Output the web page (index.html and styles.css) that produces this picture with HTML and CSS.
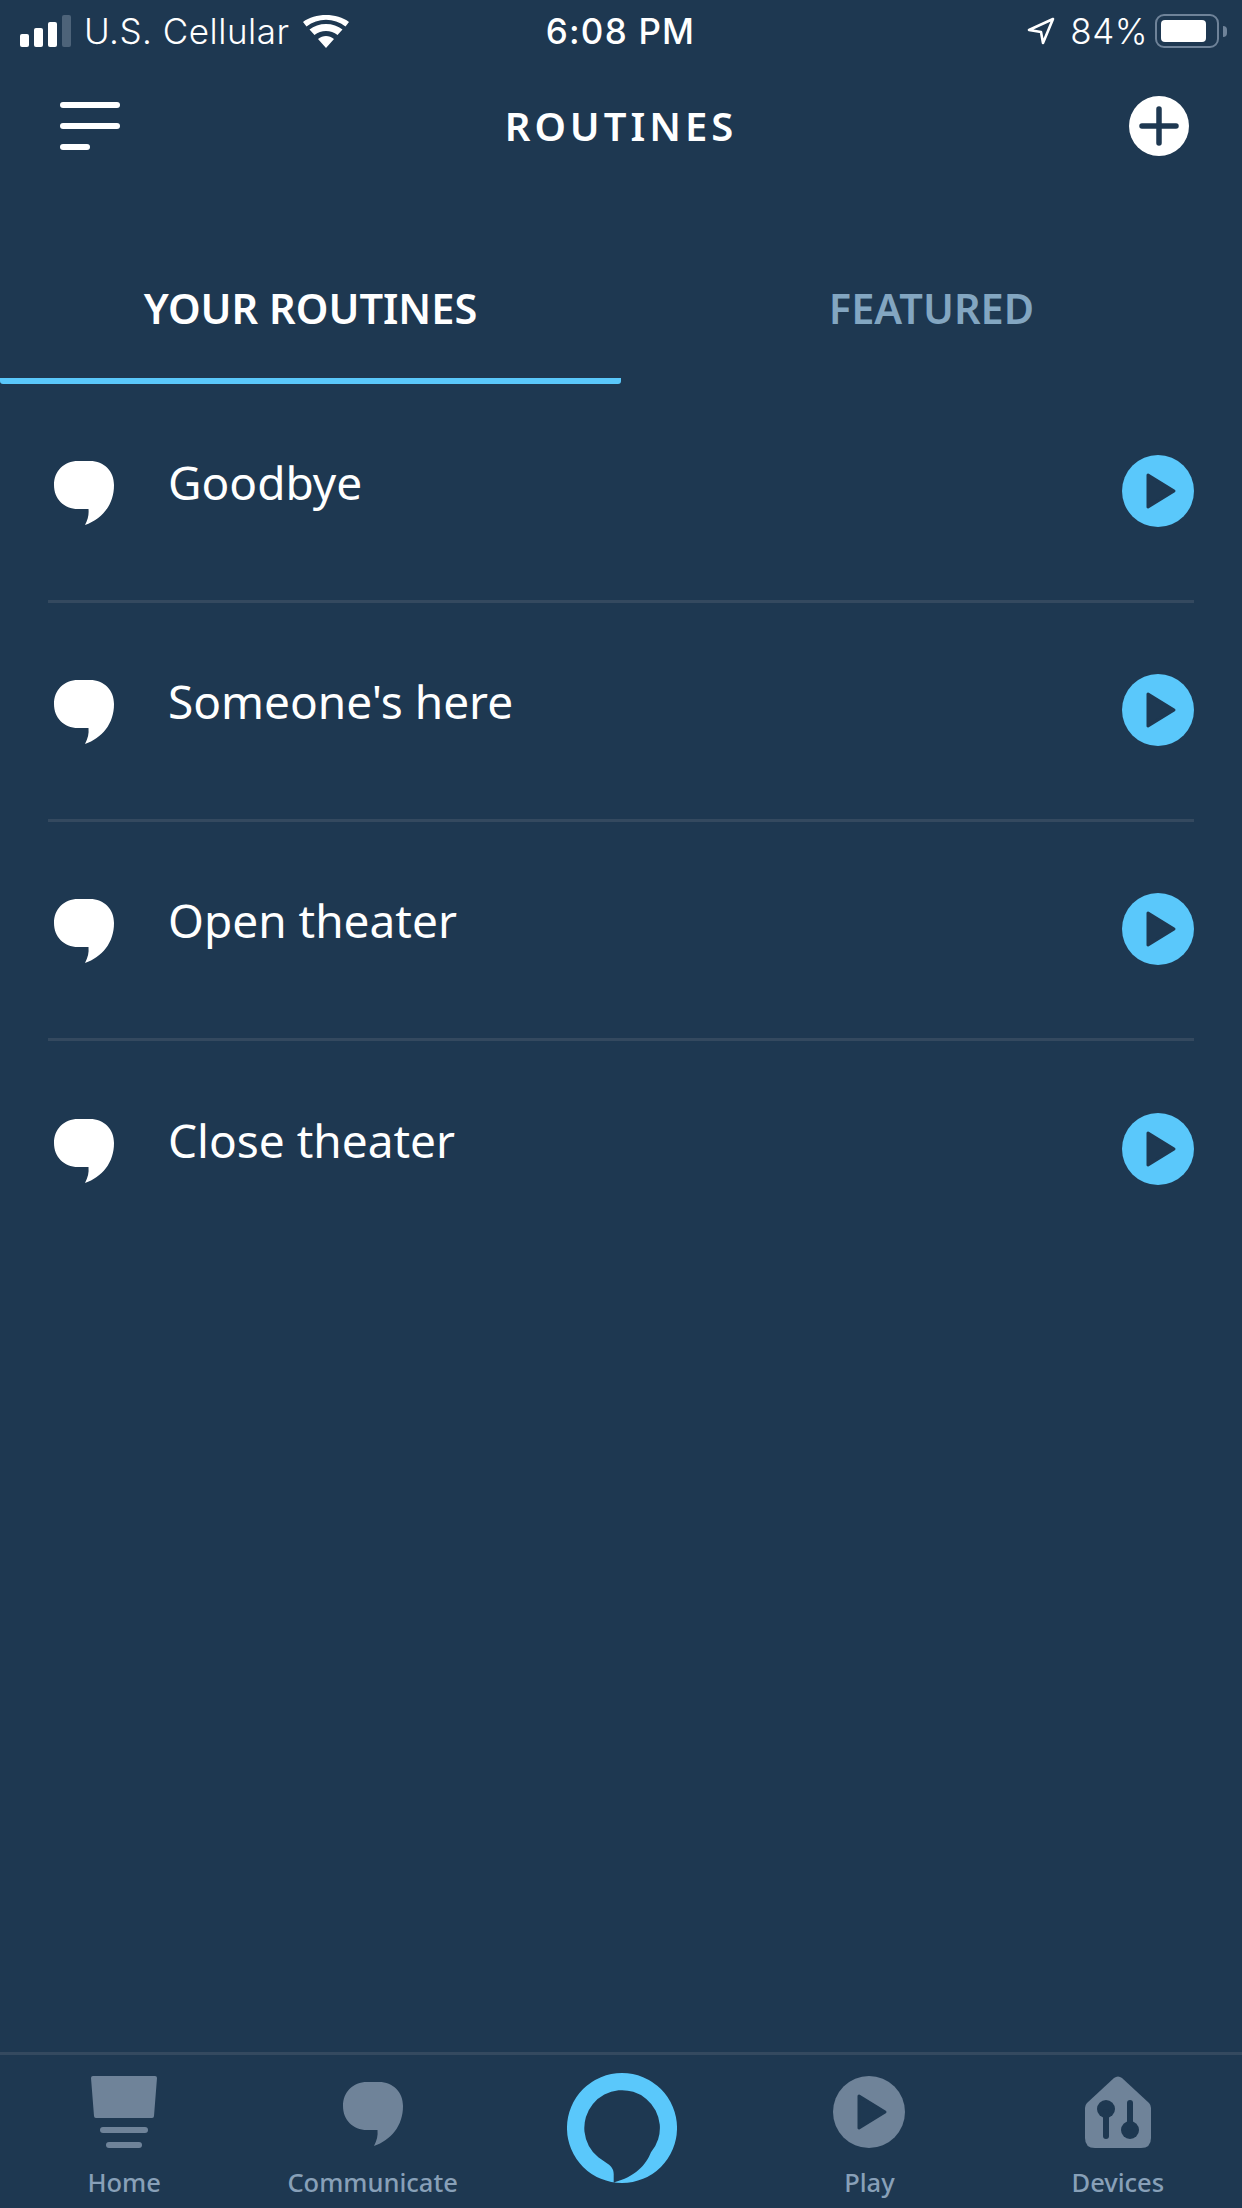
FILE: index.html
```html
<!DOCTYPE html>
<html lang="en">
<head>
    <meta charset="UTF-8">
    <meta name="viewport" content="width=device-width, initial-scale=1.0">
    <title>Routines</title>
    <link rel="stylesheet" href="styles.css">
</head>
<body>
    <div id="app">
        <div class="status">
            <div class="status-left">
                <div class="signal">
                    <span class="bar bar1"></span>
                    <span class="bar bar2"></span>
                    <span class="bar bar3"></span>
                    <span class="bar bar4"></span>
                </div>
                <span class="carrier">U.S. Cellular</span>
                <svg class="wifi" width="46" height="33" viewBox="0 0 46 33">
                    <path d="M23 33 L15 24 C20 20 26 20 31 24 Z M11.5 20 L6.5 14.5 C15 7 31 7 39.5 14.5 L34.5 20 C28 14.5 18 14.5 11.5 20 Z M3.5 11.5 L0 7 C12 -2.3 34 -2.3 46 7 L42.5 11.5 C31 2.5 15 2.5 3.5 11.5 Z" fill="#fff"></path>
                </svg>
            </div>
            <span class="time">6:08 PM</span>
            <div class="status-right">
                <svg class="arrow" width="28" height="28" viewBox="0 0 28 28">
                    <path d="M26 2 L2 13 L14 15 L16 26 Z" fill="none" stroke="#fff" stroke-width="2.6" stroke-linejoin="round"></path>
                </svg>
                <span class="percent">84%</span>
                <div class="battery"><span class="battery-fill"></span></div>
                <span class="battery-nub"></span>
            </div>
        </div>

        <div class="header">
            <div class="menu">
                <span class="menu-line"></span>
                <span class="menu-line"></span>
                <span class="menu-line short"></span>
            </div>
            <h1 class="title">ROUTINES</h1>
            <svg class="add" width="60" height="60" viewBox="0 0 60 60">
                <circle cx="30" cy="30" r="30" fill="#fff"></circle>
                <path d="M30 13 V47 M13 30 H47" stroke="#1e3851" stroke-width="5.5" stroke-linecap="round"></path>
            </svg>
        </div>

        <div class="tabs">
            <div class="tab active">YOUR ROUTINES</div>
            <div class="tab">FEATURED</div>
        </div>

        <div class="list">
            <div class="row">
                <svg class="bubble" width="60" height="64" viewBox="0 0 60 64"><path d="M24 0 H36 C50 0 60 10 60 24 C60 44 48 58 31 64 C34 58 35 54 34.5 48 H24 C10 48 0 38 0 24 C0 10 10 0 24 0 Z" fill="#fff"></path></svg>
                <span class="name">Goodbye</span>
                <svg class="run" width="72" height="72" viewBox="0 0 72 72"><circle cx="36" cy="36" r="36" fill="#5ac8fb"></circle><path d="M26 20 L52 36 L26 52 Z" fill="#1e3851" stroke="#1e3851" stroke-width="3" stroke-linejoin="round"></path></svg>
            </div>
            <div class="row">
                <svg class="bubble" width="60" height="64" viewBox="0 0 60 64"><path d="M24 0 H36 C50 0 60 10 60 24 C60 44 48 58 31 64 C34 58 35 54 34.5 48 H24 C10 48 0 38 0 24 C0 10 10 0 24 0 Z" fill="#fff"></path></svg>
                <span class="name">Someone's here</span>
                <svg class="run" width="72" height="72" viewBox="0 0 72 72"><circle cx="36" cy="36" r="36" fill="#5ac8fb"></circle><path d="M26 20 L52 36 L26 52 Z" fill="#1e3851" stroke="#1e3851" stroke-width="3" stroke-linejoin="round"></path></svg>
            </div>
            <div class="row">
                <svg class="bubble" width="60" height="64" viewBox="0 0 60 64"><path d="M24 0 H36 C50 0 60 10 60 24 C60 44 48 58 31 64 C34 58 35 54 34.5 48 H24 C10 48 0 38 0 24 C0 10 10 0 24 0 Z" fill="#fff"></path></svg>
                <span class="name">Open theater</span>
                <svg class="run" width="72" height="72" viewBox="0 0 72 72"><circle cx="36" cy="36" r="36" fill="#5ac8fb"></circle><path d="M26 20 L52 36 L26 52 Z" fill="#1e3851" stroke="#1e3851" stroke-width="3" stroke-linejoin="round"></path></svg>
            </div>
            <div class="row last">
                <svg class="bubble" width="60" height="64" viewBox="0 0 60 64"><path d="M24 0 H36 C50 0 60 10 60 24 C60 44 48 58 31 64 C34 58 35 54 34.5 48 H24 C10 48 0 38 0 24 C0 10 10 0 24 0 Z" fill="#fff"></path></svg>
                <span class="name">Close theater</span>
                <svg class="run" width="72" height="72" viewBox="0 0 72 72"><circle cx="36" cy="36" r="36" fill="#5ac8fb"></circle><path d="M26 20 L52 36 L26 52 Z" fill="#1e3851" stroke="#1e3851" stroke-width="3" stroke-linejoin="round"></path></svg>
            </div>
        </div>

        <div class="nav">
            <div class="nav-item">
                <svg class="nav-icon" width="66" height="72" viewBox="0 0 66 72">
                    <path d="M2 0 H64 Q66 0 66 2 L63 40 Q63 42 61 42 H5 Q3 42 3 40 L0 2 Q0 0 2 0 Z" fill="#6f8399"></path>
                    <rect x="9" y="51" width="48" height="6" rx="3" fill="#6f8399"></rect>
                    <rect x="15" y="66" width="36" height="6" rx="3" fill="#6f8399"></rect>
                </svg>
                <span class="nav-label">Home</span>
            </div>
            <div class="nav-item">
                <svg class="nav-icon" width="60" height="72" viewBox="0 -6 60 72">
                    <path d="M24 0 H36 C50 0 60 10 60 24 C60 44 48 58 31 64 C34 58 35 54 34.5 48 H24 C10 48 0 38 0 24 C0 10 10 0 24 0 Z" fill="#6f8399"></path>
                </svg>
                <span class="nav-label">Communicate</span>
            </div>
            <div class="nav-item alexa">
                <svg class="ring" width="110" height="110" viewBox="0 0 110 110">
                    <path fill-rule="evenodd" d="M55 0 A55 55 0 1 1 55 110 A55 55 0 1 1 55 0 Z M46.7 109.4 V101 C46.7 96 44 93 41 91 L31.3 84.3 A37.8 37.8 0 1 1 84 79.3 C79 92 68 104 46.7 109.4 Z" fill="#5ac8fb"></path>
                </svg>
            </div>
            <div class="nav-item">
                <svg class="nav-icon" width="72" height="72" viewBox="0 0 72 72">
                    <circle cx="36" cy="36" r="36" fill="#6f8399"></circle>
                    <path d="M26 20 L52 36 L26 52 Z" fill="#1e3851" stroke="#1e3851" stroke-width="3" stroke-linejoin="round"></path>
                </svg>
                <span class="nav-label">Play</span>
            </div>
            <div class="nav-item">
                <svg class="nav-icon" width="66" height="72" viewBox="0 0 66 72">
                    <path d="M29 2 Q33 -1 37 2 L64 27 Q66 29 66 32 V62 Q66 72 56 72 H10 Q0 72 0 62 V32 Q0 29 2 27 Z" fill="#6f8399"></path>
                    <circle cx="21" cy="33" r="9" fill="#1e3851"></circle>
                    <rect x="18" y="33" width="6" height="30" rx="3" fill="#1e3851"></rect>
                    <circle cx="45" cy="54" r="9" fill="#1e3851"></circle>
                    <rect x="42" y="24" width="6" height="30" rx="3" fill="#1e3851"></rect>
                </svg>
                <span class="nav-label">Devices</span>
            </div>
        </div>
    </div>
</body>
</html>
```
FILE: styles.css
```css
* {
    box-sizing: border-box;
}
body {
    margin: 0;
    background: #1e3851;
    font-family: "Noto Sans", "Open Sans", sans-serif;
    color: #fff;
}
#app {
    display: flex;
    flex-direction: column;
    height: 2208px;
}

/* status bar */
.status {
    display: grid;
    grid-template-columns: 1fr auto 1fr;
    align-items: center;
    height: 66px;
    padding: 0 15px 4px 20px;
    font-family: "Inter", sans-serif;
    font-size: 35px;
}
.status-left {
    display: flex;
    align-items: center;
}
.signal {
    display: flex;
    align-items: flex-end;
    gap: 5px;
    height: 32px;
}
.bar {
    width: 9px;
    border-radius: 2px;
    background: #fff;
}
.bar1 { height: 13px; }
.bar2 { height: 19px; }
.bar3 { height: 25px; }
.bar4 { height: 32px; background: #4d6379; }
.carrier {
    margin-left: 13px;
    font-weight: 300;
    letter-spacing: 0.5px;
}
.wifi {
    margin-left: 14px;
}
.time {
    margin-right: 6px;
    font-weight: 500;
    letter-spacing: 1.2px;
}
.status-right {
    display: flex;
    align-items: center;
    justify-content: flex-end;
}
.percent {
    margin-left: 15px;
    font-weight: 300;
    letter-spacing: 0.5px;
}
.battery {
    width: 64px;
    height: 34px;
    margin-left: 7px;
    padding: 4px;
    border: 2px solid #6f8399;
    border-radius: 9px;
}
.battery-fill {
    display: block;
    width: 45px;
    height: 22px;
    border-radius: 4px;
    background: #fff;
}
.battery-nub {
    width: 4px;
    height: 11px;
    margin-left: 4px;
    border-radius: 0 4px 4px 0;
    background: #6f8399;
}

/* header */
.header {
    display: grid;
    grid-template-columns: 1fr auto 1fr;
    align-items: center;
    height: 120px;
    padding: 0 53px;
}
.menu {
    display: flex;
    flex-direction: column;
    gap: 15px;
    width: 60px;
    margin-left: 7px;
}
.menu-line {
    height: 6px;
    border-radius: 3px;
    background: #fff;
}
.menu-line.short {
    width: 30px;
}
.title {
    margin: 0 0 2px;
    font-size: 40px;
    font-weight: 600;
    letter-spacing: 4px;
}
.add {
    justify-self: end;
}

/* tabs */
.tabs {
    display: flex;
    height: 198px;
}
.tab {
    display: flex;
    align-items: center;
    justify-content: center;
    width: 621px;
    padding-top: 51px;
    border-bottom: 6px solid transparent;
    font-size: 41.5px;
    font-weight: 600;
    color: #83a6c1;
}
.tab.active {
    color: #fff;
    border-bottom-color: #5ac8fb;
    border-radius: 0 0 3px 3px;
}

/* list */
.list {
    flex: 1;
    padding: 0 48px;
}
.row {
    display: flex;
    align-items: center;
    height: 219px;
    padding-bottom: 3px;
    border-bottom: 3px solid #34495f;
}
.row.last {
    border-bottom: none;
}
.bubble {
    flex: none;
    margin: 4px 0 0 6px;
}
.name {
    flex: 1;
    margin: 0 0 18px 54px;
    font-size: 46px;
}

/* bottom nav */
.nav {
    display: flex;
    height: 156px;
    border-top: 3px solid #34495f;
}
.nav-item {
    display: flex;
    flex: 1;
    flex-direction: column;
    align-items: center;
    padding-top: 21px;
}
.nav-item.alexa {
    padding-top: 18px;
}
.ring {
    margin-left: 2px;
}
.nav-icon {
    overflow: visible;
}
.nav-label {
    margin-top: 17px;
    font-size: 25.5px;
    font-weight: 500;
    color: #88a0b8;
}
```
